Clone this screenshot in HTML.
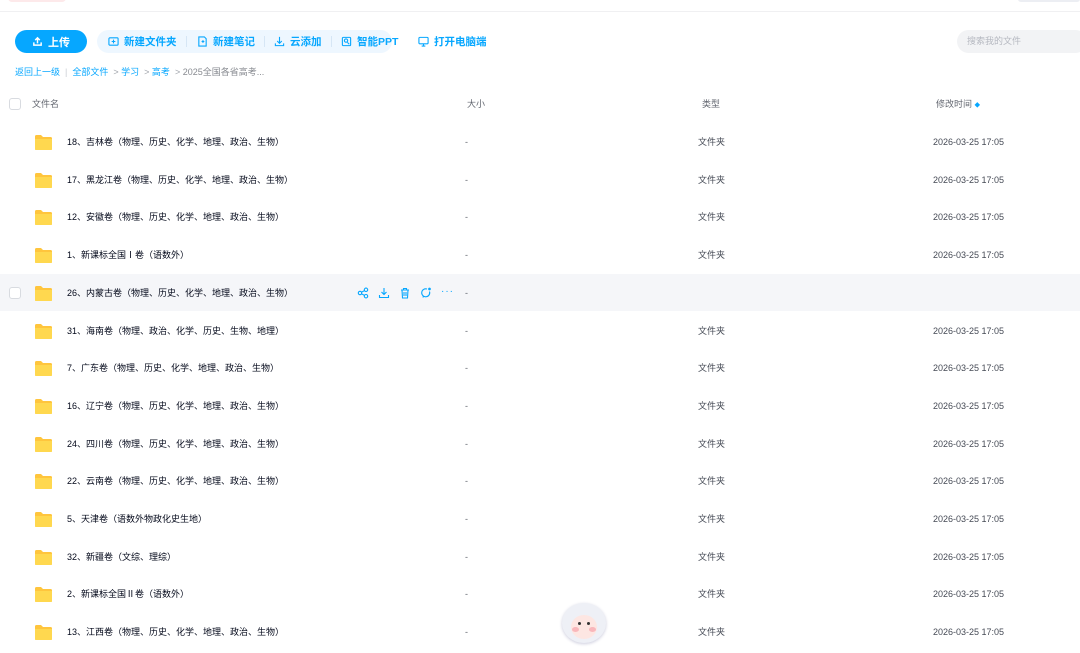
<!DOCTYPE html>
<html><head><meta charset="utf-8">
<style>
*{margin:0;padding:0;box-sizing:border-box}
body{width:1080px;height:648px;overflow:hidden;background:#fff;font-family:"Liberation Sans","Noto Sans CJK SC",sans-serif;position:relative;color:#03081a}
.a{position:absolute}
.top{left:0;top:0;width:1080px;height:12px;background:#fff;border-bottom:1px solid #f0f0f2}
.blob{left:8px;top:-6px;width:58px;height:8px;border-radius:6px;background:#fde9ea}
.blob2{left:1018px;top:-4px;width:62px;height:6px;background:#eceef3;border-radius:3px}
.up{left:15px;top:30px;width:72px;height:23px;border-radius:12px;background:#06a7ff;color:#fff;font-size:11px;font-weight:bold;display:flex;align-items:center;justify-content:center;gap:5px}
.pill{left:97px;top:30px;width:295px;height:23px;border-radius:12px;background:#eef7ff}
.tb{font-size:10.5px;font-weight:bold;color:#06a7ff;top:30px;height:23px;display:flex;align-items:center;gap:5px}
.sep{top:36px;width:1px;height:11px;background:#d6e6f5}
.search{left:957px;top:30px;width:130px;height:23px;border-radius:12px;background:#f2f3f5;color:#b5b8c0;font-size:9px;padding-left:10px;line-height:23px}
.bc{top:66px;font-size:9px;line-height:12px;color:#06a7ff;white-space:nowrap}
.hd{top:98px;font-size:9px;line-height:12px;color:#636770}
.cb{width:12px;height:12px;border:1px solid #d8dbe0;border-radius:3px;background:#fff}
.row{left:0;width:1080px;height:37px}
.nm,.sz,.tp,.tm{line-height:12px;height:12px}
.nm{left:67px;font-size:9px;color:#03081a;white-space:nowrap}
.sz{left:465px;font-size:9px;color:#636770}
.tp{left:698px;font-size:9px;color:#454a55}
.tm{left:933px;font-size:9px;color:#454a55}
.fd{left:34px;width:19px;height:17px}
</style></head><body>
<div class="a top"></div><div class="a blob"></div><div class="a blob2"></div>
<div class="a up"><svg width="11" height="11" viewBox="0 0 12 12" fill="none" stroke="#fff" stroke-width="1.6"><path d="M6 8V2M3.5 4.5L6 2l2.5 2.5M2 7v3h8V7"/></svg>上传</div>
<div class="a pill"></div>
<div class="a tb" style="left:108px"><svg width="11" height="11" viewBox="0 0 12 12" fill="none" stroke="#06a7ff" stroke-width="1.2"><rect x="1" y="2" width="10" height="8" rx="1"/><path d="M6 4v4M4 6h4"/></svg>新建文件夹</div>
<div class="a sep" style="left:186px"></div>
<div class="a tb" style="left:197px"><svg width="11" height="11" viewBox="0 0 12 12" fill="none" stroke="#06a7ff" stroke-width="1.2"><path d="M2 1h6l2 2v8H2z"/><path d="M5 6h3M6.5 4.5v3"/></svg>新建笔记</div>
<div class="a sep" style="left:264px"></div>
<div class="a tb" style="left:274px"><svg width="11" height="11" viewBox="0 0 12 12" fill="none" stroke="#06a7ff" stroke-width="1.2"><path d="M6 1v7M3.5 5.5L6 8l2.5-2.5M1.5 8v2.5h9V8"/></svg>云添加</div>
<div class="a sep" style="left:331px"></div>
<div class="a tb" style="left:341px"><svg width="11" height="11" viewBox="0 0 12 12" fill="none" stroke="#06a7ff" stroke-width="1.2"><rect x="1.5" y="1.5" width="9" height="9" rx="1"/><circle cx="5.5" cy="5" r="1.8"/><path d="M7 7l2 2"/></svg>智能PPT</div>
<div class="a tb" style="left:418px"><svg width="11" height="11" viewBox="0 0 12 12" fill="none" stroke="#06a7ff" stroke-width="1.2"><rect x="1" y="1.5" width="10" height="7" rx="1"/><path d="M4 11h4M6 8.5V11"/></svg>打开电脑端</div>
<div class="a search">搜索我的文件</div>
<div class="a bc" style="left:15px">返回上一级 <span style="color:#c8ccd2">&nbsp;|&nbsp;</span> 全部文件 <span style="color:#a0a4ab">&nbsp;&gt;&nbsp;</span>学习<span style="color:#a0a4ab">&nbsp;&nbsp;&gt;&nbsp;</span>高考<span style="color:#a0a4ab">&nbsp;&nbsp;&gt;&nbsp;</span><span style="color:#878a90">2025全国各省高考...</span></div>
<div class="a cb" style="left:9px;top:98px"></div>
<div class="a hd" style="left:32px">文件名</div>
<div class="a hd" style="left:467px">大小</div>
<div class="a hd" style="left:702px">类型</div>
<div class="a hd" style="left:936px">修改时间 <span style="color:#06a7ff;font-size:8px">⬥</span></div>
<div id="rows"></div>
<div class="a" style="left:560px;top:603px;width:48px;height:50px">
<div class="a" style="left:2px;top:0;width:44px;height:40px;border-radius:50%;background:#eef0f6;box-shadow:0 1px 3px #ccd"></div>
<div class="a" style="left:11px;top:12px;width:26px;height:24px;border-radius:50%;background:#fde6e2"></div>
<div class="a" style="left:12px;top:24px;width:7px;height:5px;border-radius:50%;background:#f9b7bb"></div>
<div class="a" style="left:29px;top:24px;width:7px;height:5px;border-radius:50%;background:#f9b7bb"></div>
<div class="a" style="left:18px;top:19px;width:3px;height:3px;border-radius:50%;background:#333"></div>
<div class="a" style="left:27px;top:19px;width:3px;height:3px;border-radius:50%;background:#333"></div>
</div>
<script>
var n=["18、吉林卷（物理、历史、化学、地理、政治、生物）","17、黑龙江卷（物理、历史、化学、地理、政治、生物）","12、安徽卷（物理、历史、化学、地理、政治、生物）","1、新课标全国Ⅰ卷（语数外）","26、内蒙古卷（物理、历史、化学、地理、政治、生物）","31、海南卷（物理、政治、化学、历史、生物、地理）","7、广东卷（物理、历史、化学、地理、政治、生物）","16、辽宁卷（物理、历史、化学、地理、政治、生物）","24、四川卷（物理、历史、化学、地理、政治、生物）","22、云南卷（物理、历史、化学、地理、政治、生物）","5、天津卷（语数外物政化史生地）","32、新疆卷（文综、理综）","2、新课标全国Ⅱ卷（语数外）","13、江西卷（物理、历史、化学、地理、政治、生物）"];
var h="";
var folder='<svg viewBox="0 0 19 17" width="19" height="17"><path d="M1 2.5Q1 1 2.5 1H7l2 2h7.5Q18 3 18 4.5V15Q18 16 16.5 16h-14Q1 16 1 15z" fill="#ffc53d"/><path d="M1 5h17v10q0 1-1.5 1h-14Q1 16 1 15z" fill="#ffd84f"/></svg>';
for(var i=0;i<n.length;i++){var c=142+i*37.7;var t=c-6;
if(i==4){h+='<div class="a row" style="top:'+(c-19)+'px;background:#f5f6f9"></div><div class="a cb" style="left:9px;top:'+(c-6)+'px"></div>';
h+='<div class="a" style="left:357px;top:'+(c-6)+'px;display:flex;gap:9px"><svg width="12" height="12" viewBox="0 0 12 12" fill="none" stroke="#06a7ff" stroke-width="1.1"><circle cx="3" cy="6" r="1.7"/><circle cx="9" cy="2.8" r="1.7"/><circle cx="9" cy="9.2" r="1.7"/><path d="M4.5 5.2l3-1.6M4.5 6.8l3 1.6"/></svg><svg width="12" height="12" viewBox="0 0 12 12" fill="none" stroke="#06a7ff" stroke-width="1.1"><path d="M6 1v6.5M3.5 5L6 7.5 8.5 5M1.5 8v2.5h9V8"/></svg><svg width="12" height="12" viewBox="0 0 12 12" fill="none" stroke="#06a7ff" stroke-width="1.1"><path d="M2 3h8M4.5 3V1.5h3V3M3 3l.5 8h5L9 3M5 5v4M7 5v4"/></svg><svg width="12" height="12" viewBox="0 0 12 12" fill="none" stroke="#06a7ff" stroke-width="1.1"><path d="M9.5 4.5A4 4 0 1 1 7 2M3 10.5l.5-2"/><circle cx="9.5" cy="2" r="0.8" fill="#06a7ff"/></svg><span style="color:#06a7ff;font-size:10px;line-height:10px;letter-spacing:1px">···</span></div>';}
h+='<div class="a fd" style="top:'+(c-8)+'px">'+folder+'</div>';
h+='<div class="a nm" style="top:'+t+'px">'+n[i]+'</div>';
h+='<div class="a sz" style="top:'+t+'px">-</div>';
if(i!=4){h+='<div class="a tp" style="top:'+t+'px">文件夹</div><div class="a tm" style="top:'+t+'px">2026-03-25 17:05</div>';}
}
document.getElementById("rows").innerHTML=h;
</script>
</body></html>
